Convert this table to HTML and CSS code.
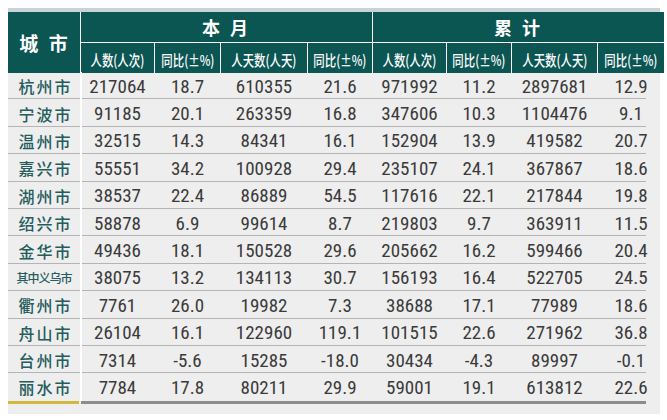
FILE: index.html
```html
<!DOCTYPE html>
<html lang="zh">
<head>
<meta charset="utf-8">
<link rel="stylesheet" href="styles.css">
</head>
<body>
<div class="panel">
  <div class="strip"></div>
  <div class="head">
    <div class="h-city">城 市</div>
    <div class="h-group g1">本 月</div>
    <div class="h-group g2">累 计</div>
    <div class="h-sub c1"><span>人数(人次)</span></div>
    <div class="h-sub c2"><span>同比(±%)</span></div>
    <div class="h-sub c3"><span>人天数(人天)</span></div>
    <div class="h-sub c4"><span>同比(±%)</span></div>
    <div class="h-sub c5"><span>人数(人次)</span></div>
    <div class="h-sub c6"><span>同比(±%)</span></div>
    <div class="h-sub c7"><span>人天数(人天)</span></div>
    <div class="h-sub c8 last"><span>同比(±%)</span></div>
  </div>
  <div class="body">
    <div class="row"><div class="city">杭州市</div><div>217064</div><div>18.7</div><div>610355</div><div>21.6</div><div>971992</div><div>11.2</div><div>2897681</div><div>12.9</div></div>
    <div class="row"><div class="city">宁波市</div><div>91185</div><div>20.1</div><div>263359</div><div>16.8</div><div>347606</div><div>10.3</div><div>1104476</div><div>9.1</div></div>
    <div class="row"><div class="city">温州市</div><div>32515</div><div>14.3</div><div>84341</div><div>16.1</div><div>152904</div><div>13.9</div><div>419582</div><div>20.7</div></div>
    <div class="row"><div class="city">嘉兴市</div><div>55551</div><div>34.2</div><div>100928</div><div>29.4</div><div>235107</div><div>24.1</div><div>367867</div><div>18.6</div></div>
    <div class="row"><div class="city">湖州市</div><div>38537</div><div>22.4</div><div>86889</div><div>54.5</div><div>117616</div><div>22.1</div><div>217844</div><div>19.8</div></div>
    <div class="row"><div class="city">绍兴市</div><div>58878</div><div>6.9</div><div>99614</div><div>8.7</div><div>219803</div><div>9.7</div><div>363911</div><div>11.5</div></div>
    <div class="row"><div class="city">金华市</div><div>49436</div><div>18.1</div><div>150528</div><div>29.6</div><div>205662</div><div>16.2</div><div>599466</div><div>20.4</div></div>
    <div class="row"><div class="city small">其中义乌市</div><div>38075</div><div>13.2</div><div>134113</div><div>30.7</div><div>156193</div><div>16.4</div><div>522705</div><div>24.5</div></div>
    <div class="row"><div class="city">衢州市</div><div>7761</div><div>26.0</div><div>19982</div><div>7.3</div><div>38688</div><div>17.1</div><div>77989</div><div>18.6</div></div>
    <div class="row"><div class="city">舟山市</div><div>26104</div><div>16.1</div><div>122960</div><div>119.1</div><div>101515</div><div>22.6</div><div>271962</div><div>36.8</div></div>
    <div class="row"><div class="city">台州市</div><div>7314</div><div>-5.6</div><div>15285</div><div>-18.0</div><div>30434</div><div>-4.3</div><div>89997</div><div>-0.1</div></div>
    <div class="row lastrow"><div class="city">丽水市</div><div>7784</div><div>17.8</div><div>80211</div><div>29.9</div><div>59001</div><div>19.1</div><div>613812</div><div>22.6</div></div>
  </div>
  <div class="foot">
    <div class="foot-city"></div>
    <div class="foot-data"></div>
  </div>
</div>
</body>
</html>
```
FILE: styles.css
```css
* { box-sizing: border-box; }
html, body { margin: 0; padding: 0; background: #ffffff; }
body { padding: 8px 0 0 8px; }

.panel {
  width: 652px;
  height: 406px;
  background: #eeeeee;
  display: flex;
  flex-direction: column;
}

.strip { height: 4px; background: #c9d3d6; }

.head {
  display: grid;
  grid-template-columns: 72px 73px 65px 86px 64px 73px 64px 85px 66px;
  grid-template-rows: 30px 30px;
  column-gap: 1px;
  row-gap: 1px;
  background: #ffffff;
  width: 651px;
  height: 60px;
  color: #ffffff;
  font-family: "Noto Sans CJK SC", sans-serif;
}
.head > div {
  background: #0b5553;
  display: flex;
  align-items: center;
  justify-content: center;
}
.h-city {
  grid-row: 1 / 3;
  grid-column: 1;
  font-size: 19px;
  font-weight: 700;
  letter-spacing: 3px;
  padding-left: 2px;
}
.h-group { font-size: 18px; font-weight: 700; letter-spacing: 3px; }
.g1 { grid-column: 2 / 6; grid-row: 1; }
.g2 { grid-column: 6 / 10; grid-row: 1; }
.h-sub { grid-row: 2; font-size: 15px; font-weight: 500; padding-top: 3px; }
.h-sub span { display: inline-block; transform: scaleX(0.76); white-space: nowrap; }

.body { display: flex; flex-direction: column; }
.row {
  display: grid;
  grid-template-columns: 72px 73px 65px 86px 64px 73px 64px 85px 66px;
  column-gap: 1px;
  height: 27.4px;
  align-items: center;
  background:
    linear-gradient(#ffffff, #ffffff) 72px 0 / 2px 100% no-repeat,
    linear-gradient(#b4b4b4, #b4b4b4) 0 100% / 638px 1px no-repeat;
  font-family: "Liberation Sans Narrow", "Roboto Condensed", "Liberation Sans", sans-serif;
  font-size: 19px;
  color: #3a3a3a;
}
.row.lastrow { background: linear-gradient(#ffffff, #ffffff) 72px 0 / 2px 100% no-repeat; }
.row > div { text-align: center; padding-top: 1px; }
.row > .city {
  font-family: "Noto Sans CJK SC", sans-serif;
  font-size: 16px;
  color: #255c5c;
  letter-spacing: 2px;
  padding-left: 3px;
  font-weight: 500;
}
.row > .city.small {
  font-size: 12px;
  letter-spacing: -1px;
  padding-left: 0;
}

.foot { display: flex; height: 3px; gap: 2px; }
.foot-city { width: 71px; background: #d2b83c; }
.foot-data { width: 565px; background: #8c8c8c; }
```
